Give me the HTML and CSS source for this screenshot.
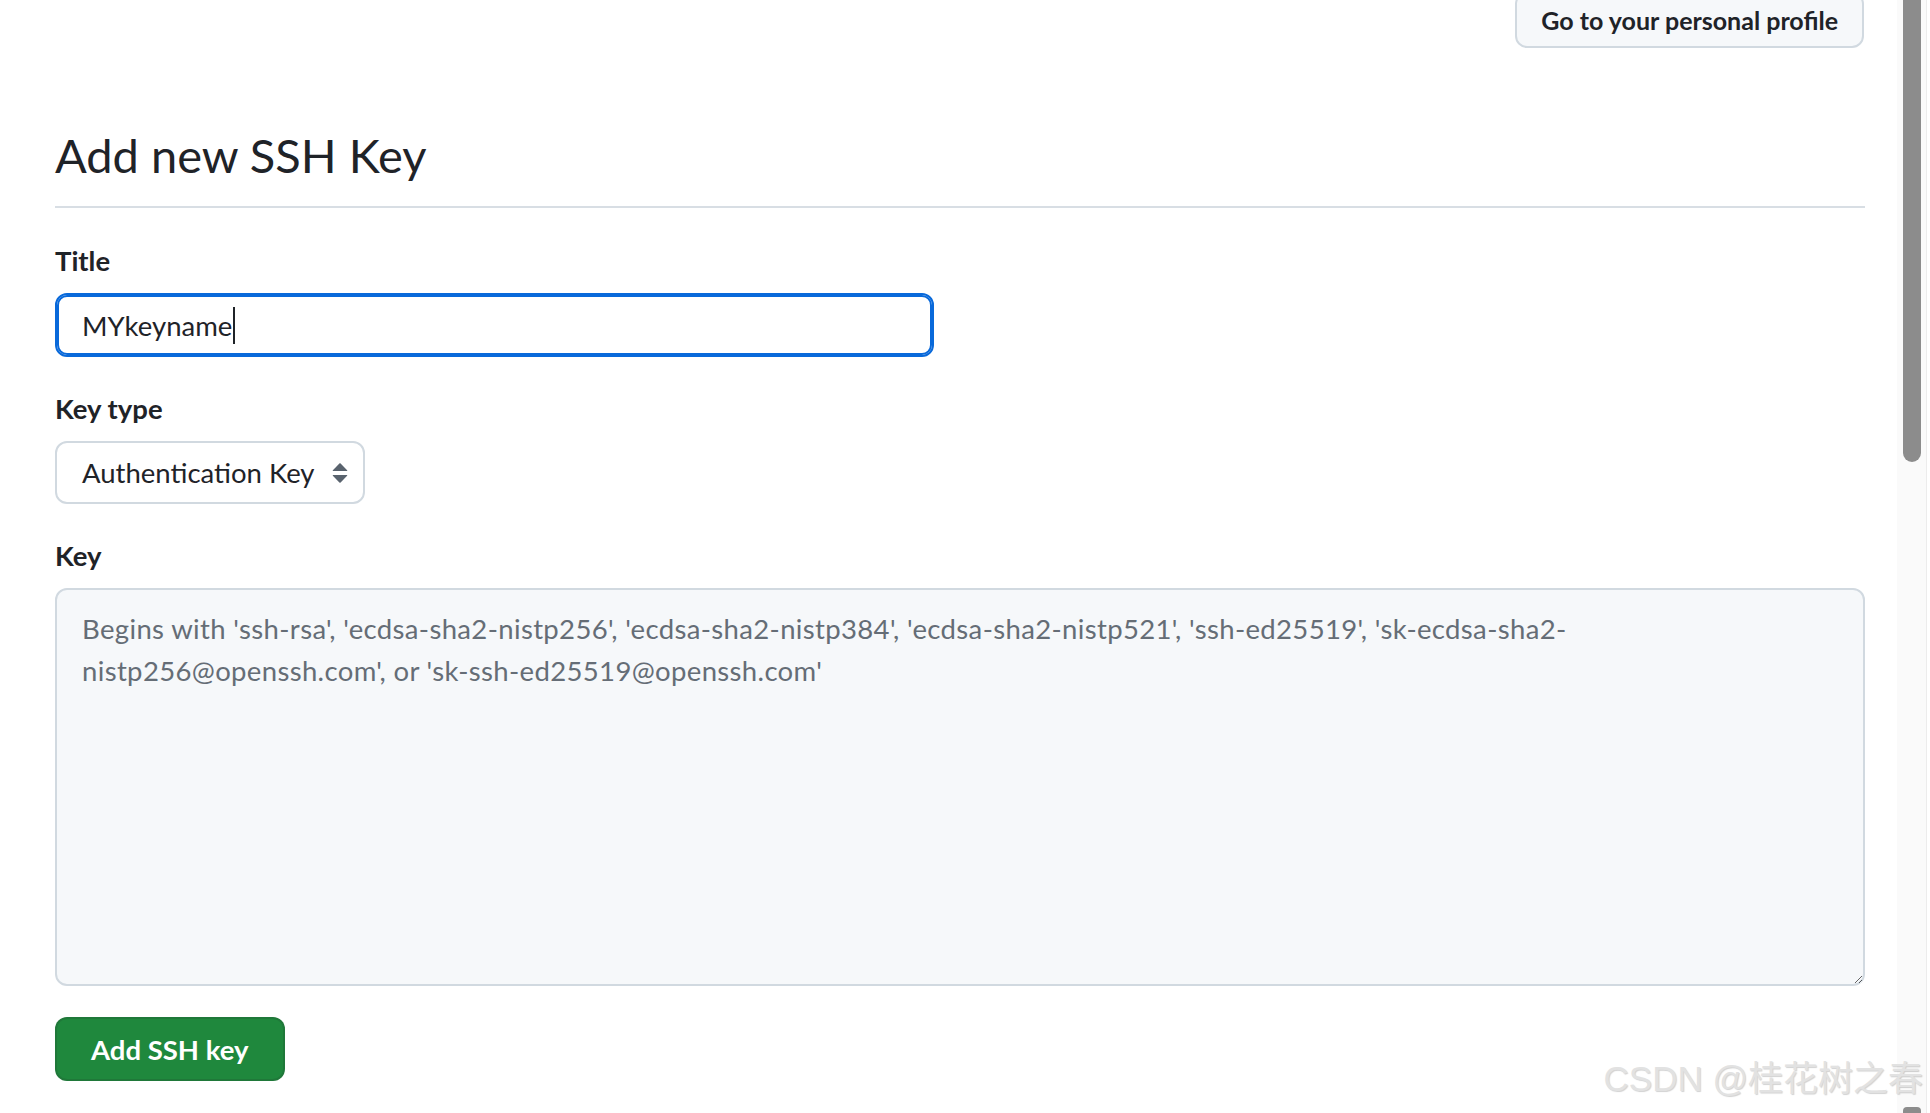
FILE: index.html
```html
<!DOCTYPE html>
<html lang="en">
<head>
<meta charset="utf-8">
<title>Add new SSH Key</title>
<link rel="stylesheet" href="styles.css">
</head>
<body>
<div class="page">
  <main class="main">
    <div class="top-row">
      <a class="btn btn-sm" href="#">Go to your personal profile</a>
    </div>
    <div class="subhead">
      <h2 class="subhead-heading">Add new SSH Key</h2>
    </div>
    <form class="ssh-form">
      <div class="form-group">
        <label class="form-label">Title</label>
        <div class="form-input focused"><span class="input-value">MYkeyname</span><span class="caret"></span></div>
      </div>
      <div class="form-group">
        <label class="form-label">Key type</label>
        <div class="form-select">
          <span class="select-value">Authentication Key</span>
          <svg class="select-icon" viewBox="0 0 16 16" width="32" height="32" aria-hidden="true"><path d="M4.427 9.427l3.396 3.396a.25.25 0 00.354 0l3.396-3.396A.25.25 0 0011.396 9H4.604a.25.25 0 00-.177.427zM4.427 6.573l3.396-3.396a.25.25 0 01.354 0l3.396 3.396A.25.25 0 0111.396 7H4.604a.25.25 0 01-.177-.427z"/></svg>
        </div>
      </div>
      <div class="form-group">
        <label class="form-label">Key</label>
        <textarea class="form-textarea" placeholder="Begins with 'ssh-rsa', 'ecdsa-sha2-nistp256', 'ecdsa-sha2-nistp384', 'ecdsa-sha2-nistp521', 'ssh-ed25519', 'sk-ecdsa-sha2-&#10;nistp256@openssh.com', or 'sk-ssh-ed25519@openssh.com'"></textarea>
      </div>
      <div class="form-actions">
        <button type="button" class="btn-primary">Add SSH key</button>
      </div>
    </form>
  </main>
  <div class="scrollbar">
    <div class="scroll-thumb"></div>
    <div class="scroll-arrow"></div>
  </div>
</div>
<div class="watermark">CSDN @桂花树之春</div>
</body>
</html>
```
FILE: styles.css
```css
* { box-sizing: border-box; }
html, body { margin: 0; padding: 0; height: 100%; overflow: hidden; background: #ffffff; }
body {
  font-family: Lato, "Noto Sans", sans-serif;
  color: #1f2328;
  font-size: 27.5px;
}
.page { display: flex; height: 1113px; }
.main {
  flex: 1;
  display: flex;
  flex-direction: column;
  padding: 0 32px 0 55px;
}
.top-row { display: flex; justify-content: flex-end; }
.btn {
  display: inline-flex;
  align-items: center;
  height: 56px;
  margin-top: -8px;
  margin-right: 1px;
  padding: 0 24px;
  font-size: 25px;
  font-weight: 700;
  color: #1f2328;
  text-decoration: none;
  background: #f6f8fa;
  border: 2px solid #d1d9e0;
  border-radius: 12px;
}
.subhead {
  margin-top: 77px;
  padding-bottom: 21px;
  border-bottom: 2px solid #d8dee4;
}
.subhead-heading {
  margin: 0;
  font-size: 47px;
  font-weight: 400;
  line-height: 60px;
  color: #1f2328;
}
.ssh-form { display: flex; flex-direction: column; margin-top: 32px; }
.form-group { display: flex; flex-direction: column; align-items: flex-start; margin-bottom: 31px; }
.form-label {
  display: block;
  font-weight: 700;
  line-height: 42px;
  margin-bottom: 11px;
}
.form-input {
  display: flex;
  align-items: center;
  width: 879px;
  height: 64px;
  padding: 0 25px;
  border: 2px solid #0969da;
  box-shadow: inset 0 0 0 2px #0969da;
  border-radius: 12px;
  background: #ffffff;
  color: #1f2328;
}
.caret {
  display: inline-block;
  width: 2px;
  height: 37px;
  margin-left: 1px;
  background: #1f2328;
}
.form-select {
  display: inline-flex;
  align-items: center;
  height: 63px;
  padding: 0 7px 0 25px;
  gap: 10px;
  border: 2px solid #d1d9e0;
  border-radius: 12px;
  background: #ffffff;
}
.select-icon { fill: #59636e; flex: none; }
.form-textarea {
  display: block;
  width: 100%;
  height: 398px;
  padding: 18px 25px 14px;
  font-family: Lato, "Noto Sans", sans-serif;
  font-size: 27.5px;
  letter-spacing: 0.35px;
  line-height: 42px;
  color: #1f2328;
  background: #f6f8fa;
  border: 2px solid #d1d9e0;
  border-radius: 12px;
  resize: vertical;
  outline: none;
}
.form-textarea::placeholder { color: #656d76; opacity: 1; }
.form-actions { display: flex; }
.btn-primary {
  height: 64px;
  padding: 0 34px;
  font-family: Lato, "Noto Sans", sans-serif;
  font-size: 27.5px;
  font-weight: 700;
  color: #ffffff;
  background: #1f883d;
  border: 2px solid rgba(31, 35, 40, 0.15);
  border-radius: 12px;
  cursor: pointer;
}
.scrollbar {
  position: relative;
  width: 33px;
  flex: none;
  background: #fafafa;
  border-right: 3px solid #ffffff;
  box-shadow: inset -1px 0 0 #ececec;
}
.scroll-thumb {
  margin-left: 6px;
  width: 18px;
  height: 462px;
  background: #8c8c8c;
  border-radius: 0 0 9px 9px;
}
.scroll-arrow {
  position: absolute;
  left: 6px;
  bottom: 0;
  width: 18px;
  height: 6px;
  background: #8c8c8c;
  border-radius: 4px 4px 0 0;
}
.watermark {
  position: absolute;
  right: 7px;
  bottom: 14px;
  font-family: "Liberation Sans", "Noto Sans CJK SC", sans-serif;
  font-size: 35px;
  line-height: 40px;
  color: #e2e2e2;
  text-shadow: 1px 1px 1px rgba(0, 0, 0, 0.18);
  white-space: nowrap;
}
```
